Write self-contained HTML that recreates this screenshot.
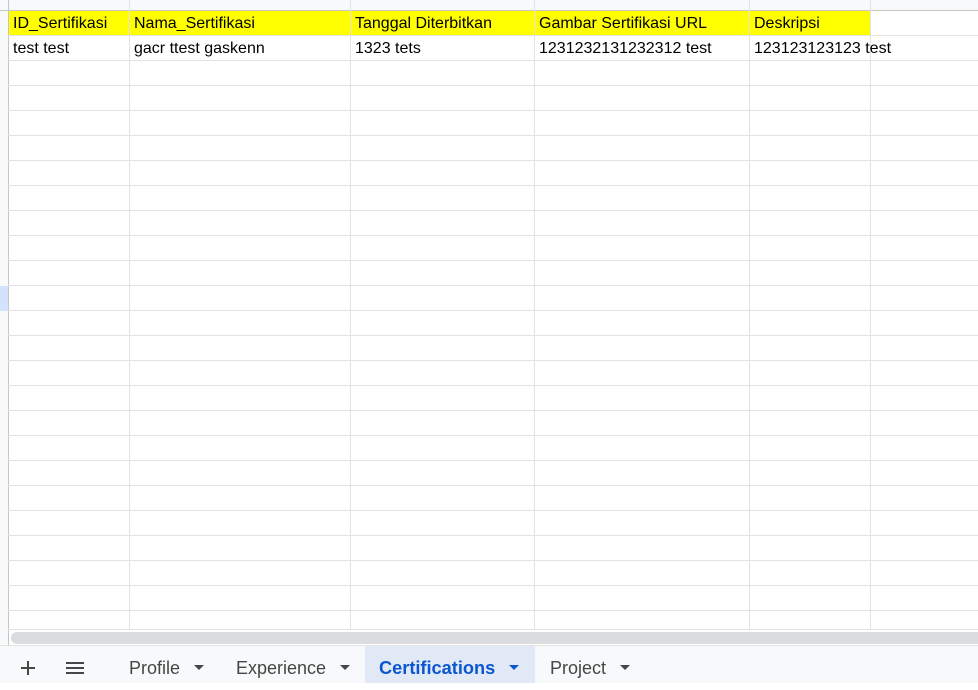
<!DOCTYPE html>
<html><head><meta charset="utf-8"><style>
*{margin:0;padding:0;box-sizing:border-box}
body{width:978px;height:683px;overflow:hidden;background:#fff;position:relative;font-family:"Liberation Sans",Arial,sans-serif}
.a{position:absolute}
.h{position:absolute;left:8px;right:0;height:1px;background:#e2e2e2}
.v{position:absolute;top:0;width:1px;height:630px;background:#e2e2e2}
.t{position:absolute;font-size:16px;color:#000;line-height:25px;white-space:nowrap}
.tab{position:absolute;top:646px;height:37px;line-height:44px;font-size:18px;color:#444746;white-space:nowrap}
.car{display:inline-block;width:0;height:0;border-left:5px solid transparent;border-right:5px solid transparent;border-top:5px solid #444746;vertical-align:middle;margin-left:14px;position:relative;top:-2px}
</style></head><body>
<div class="a" style="left:0;top:0;width:978px;height:10px;background:#f8f9fa"></div>
<div class="a" style="left:0;top:0;width:8px;height:645px;background:#f8f9fa"></div>
<div class="a" style="left:0;top:286px;width:8px;height:25px;background:#d3e3fd"></div>
<div class="a" style="left:0;top:10px;width:978px;height:1px;background:#c4c7c5"></div>
<div class="a" style="left:8px;top:0;width:1px;height:645px;background:#c4c7c5"></div>
<div class="a" style="left:9px;top:11px;width:862px;height:24px;background:#ffff00"></div>
<div class="h" style="top:35px"></div><div class="h" style="top:60px"></div><div class="h" style="top:85px"></div><div class="h" style="top:110px"></div><div class="h" style="top:135px"></div><div class="h" style="top:160px"></div><div class="h" style="top:185px"></div><div class="h" style="top:210px"></div><div class="h" style="top:235px"></div><div class="h" style="top:260px"></div><div class="h" style="top:285px"></div><div class="h" style="top:310px"></div><div class="h" style="top:335px"></div><div class="h" style="top:360px"></div><div class="h" style="top:385px"></div><div class="h" style="top:410px"></div><div class="h" style="top:435px"></div><div class="h" style="top:460px"></div><div class="h" style="top:485px"></div><div class="h" style="top:510px"></div><div class="h" style="top:535px"></div><div class="h" style="top:560px"></div><div class="h" style="top:585px"></div><div class="h" style="top:610px"></div><div class="h" style="top:629px"></div>
<div class="v" style="left:129px"></div><div class="v" style="left:350px"></div><div class="v" style="left:534px"></div><div class="v" style="left:749px"></div><div class="v" style="left:870px"></div>
<div class="t" style="left:13px;top:11px">ID_Sertifikasi</div>
<div class="t" style="left:134px;top:11px">Nama_Sertifikasi</div>
<div class="t" style="left:355px;top:11px">Tanggal Diterbitkan</div>
<div class="t" style="left:539px;top:11px">Gambar Sertifikasi URL</div>
<div class="t" style="left:754px;top:11px">Deskripsi</div>
<div class="t" style="left:13px;top:36px">test test</div>
<div class="t" style="left:134px;top:36px">gacr ttest gaskenn</div>
<div class="t" style="left:355px;top:36px">1323 tets</div>
<div class="t" style="left:539px;top:36px">1231232131232312 test</div>
<div class="t" style="left:754px;top:36px">123123123123 test</div>
<div class="a" style="left:9px;top:630px;width:969px;height:15px;background:#fff"></div>
<div class="a" style="left:11px;top:632px;width:980px;height:12px;border-radius:6px;background:#dadce0"></div>
<div class="a" style="left:0;top:645px;width:978px;height:38px;background:#f8f9fa;border-top:1px solid #e1e3e1"></div>
<div class="a" style="left:365px;top:646px;width:170px;height:37px;background:#e1e9f7"></div>
<div class="a" style="left:21px;top:667px;width:14px;height:2px;background:#444746"></div>
<div class="a" style="left:27px;top:661px;width:2px;height:14px;background:#444746"></div>
<div class="a" style="left:66px;top:662px;width:18px;height:2px;background:#444746"></div>
<div class="a" style="left:66px;top:667px;width:18px;height:2px;background:#444746"></div>
<div class="a" style="left:66px;top:672px;width:18px;height:2px;background:#444746"></div>
<div class="tab" style="left:129px">Profile<span class="car"></span></div>
<div class="tab" style="left:236px">Experience<span class="car"></span></div>
<div class="tab" style="left:379px;color:#0b57d0;font-weight:bold;font-size:18.2px">Certifications<span class="car" style="border-top-color:#0b57d0"></span></div>
<div class="tab" style="left:550px">Project<span class="car"></span></div>
</body></html>
